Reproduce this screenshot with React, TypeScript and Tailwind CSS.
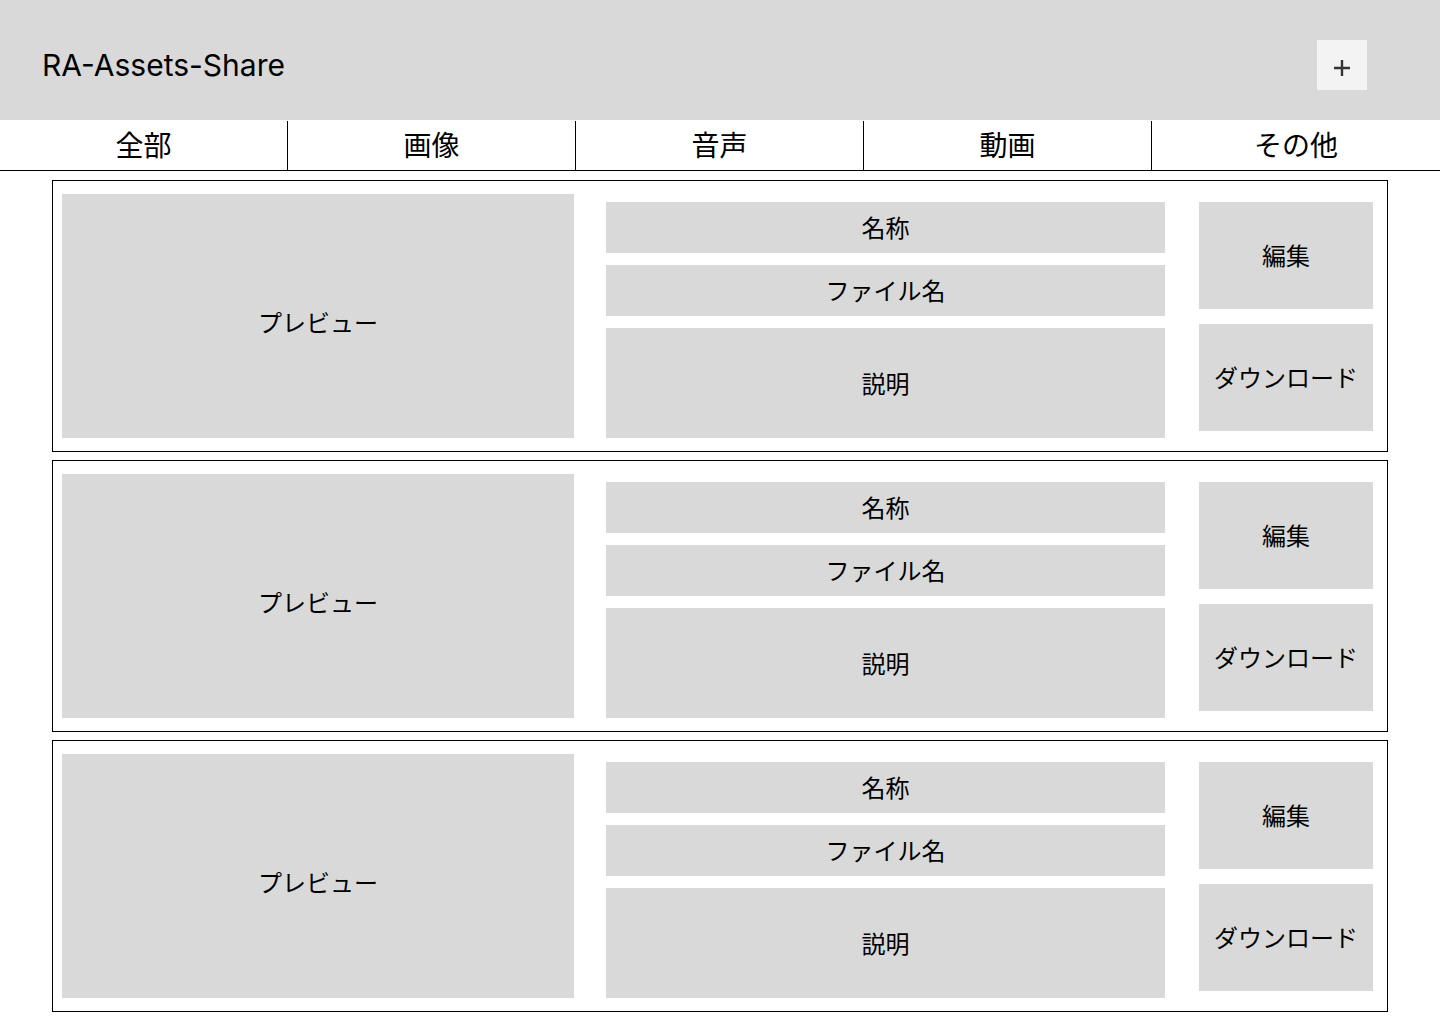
import React from "react";

const jp = { fontFamily: '"Noto Sans CJK JP", "Noto Sans", sans-serif' };

function Card() {
  return (
    <div className="flex h-[272px] w-[1336px] items-start border border-black pl-[9px] pr-[13px] pt-[13px]">
      <div className="flex h-[244px] w-[512px] shrink-0 items-center justify-center bg-[#d9d9d9] pt-[12px] text-[24px] text-black">
        プレビュー
      </div>
      <div className="ml-[32px] mt-[8px] flex w-[559px] shrink-0 flex-col gap-[12px]">
        <div className="flex h-[51px] items-center justify-center bg-[#d9d9d9] pb-[2px] text-[24px] text-black">名称</div>
        <div className="flex h-[51px] items-center justify-center bg-[#d9d9d9] pb-[1px] text-[24px] text-black">ファイル名</div>
        <div className="flex h-[110px] items-center justify-center bg-[#d9d9d9] text-[24px] text-black">説明</div>
      </div>
      <div className="ml-[34px] mt-[8px] flex w-[174px] shrink-0 flex-col gap-[15px]">
        <div className="flex h-[107px] items-center justify-center bg-[#d9d9d9] pb-[2px] text-[24px] text-black">編集</div>
        <div className="flex h-[107px] items-center justify-center bg-[#d9d9d9] pb-[2px] text-[24px] text-black">ダウンロード</div>
      </div>
    </div>
  );
}

export default function App() {
  const tabs = ["全部", "画像", "音声", "動画", "その他"];
  return (
    <div className="min-h-[1024px] w-[1440px] bg-white" style={jp}>
      <header className="flex h-[120px] items-center justify-between bg-[#d9d9d9] pl-[42px] pr-[73px]">
        <h1
          className="mt-[10px] text-[30px] font-normal leading-none text-black"
          style={{ fontFamily: 'Inter, "Noto Sans CJK JP", sans-serif' }}
        >
          RA-Assets-Share
        </h1>
        <button className="mt-[10px] flex h-[50px] w-[50px] items-center justify-center bg-[#f3f3f3] pt-[5px]">
          <svg width="18" height="18" viewBox="0 0 18 18" fill="none">
            <path d="M9 1v16M1 9h16" stroke="#333" strokeWidth="2.4" />
          </svg>
        </button>
      </header>
      <nav className="grid h-[51px] grid-cols-5 border-b border-black pt-[1px]">
        {tabs.map((t, i) => (
          <div
            key={t}
            className={
              i < 4
                ? "flex items-center justify-center border-r border-black pb-[3px] text-[28px] text-black"
                : "flex items-center justify-center pb-[3px] text-[28px] text-black"
            }
          >
            {t}
          </div>
        ))}
      </nav>
      <main className="flex flex-col items-center gap-[8px] pt-[9px]">
        <Card />
        <Card />
        <Card />
      </main>
    </div>
  );
}
